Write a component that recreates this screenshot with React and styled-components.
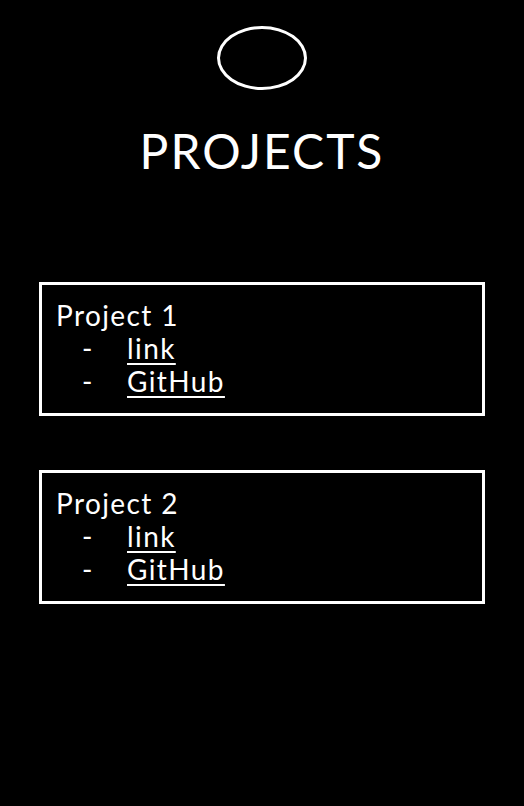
import React from "react";
import styled, { createGlobalStyle } from "styled-components";

const GlobalStyle = createGlobalStyle`
  html, body {
    margin: 0;
    padding: 0;
    background: #000;
  }
  body {
    font-family: "Lato", "Noto Sans", sans-serif;
    color: #fff;
  }
`;

const Page = styled.div`
  min-height: 806px;
  background: #000;
  display: flex;
  flex-direction: column;
  align-items: center;
  padding-top: 26px;
  box-sizing: border-box;
`;

const Logo = styled.div`
  width: 90px;
  height: 64px;
  border: 3px solid #fff;
  border-radius: 50%;
  box-sizing: border-box;
`;

const Title = styled.h1`
  margin: 33px 0 0;
  font-size: 48px;
  font-weight: 400;
  letter-spacing: 2px;
  line-height: 56px;
`;

const List = styled.div`
  width: 446px;
  margin-top: 103px;
  display: flex;
  flex-direction: column;
  gap: 54px;
`;

const Card = styled.div`
  border: 3px solid #fff;
  height: 134px;
  box-sizing: border-box;
  padding: 14px 14px 10px;
  font-size: 28px;
  line-height: 33px;
  letter-spacing: 1.4px;
`;

const Name = styled.div``;

const Links = styled.ul`
  margin: 0;
  padding: 0;
  list-style: none;
`;

const Item = styled.li`
  display: flex;
`;

const Dash = styled.span`
  width: 71px;
  padding-left: 26px;
  box-sizing: border-box;
`;

const Link = styled.a`
  color: #fff;
  text-decoration: underline;
  text-underline-offset: 4px;
`;

const projects = [
  { name: "Project 1" },
  { name: "Project 2" },
];

export default function App() {
  return (
    <>
      <GlobalStyle />
      <Page>
        <Logo />
        <Title>PROJECTS</Title>
        <List>
          {projects.map((p) => (
            <Card key={p.name}>
              <Name>{p.name}</Name>
              <Links>
                <Item>
                  <Dash>-</Dash>
                  <Link href="#">link</Link>
                </Item>
                <Item>
                  <Dash>-</Dash>
                  <Link href="#">GitHub</Link>
                </Item>
              </Links>
            </Card>
          ))}
        </List>
      </Page>
    </>
  );
}
